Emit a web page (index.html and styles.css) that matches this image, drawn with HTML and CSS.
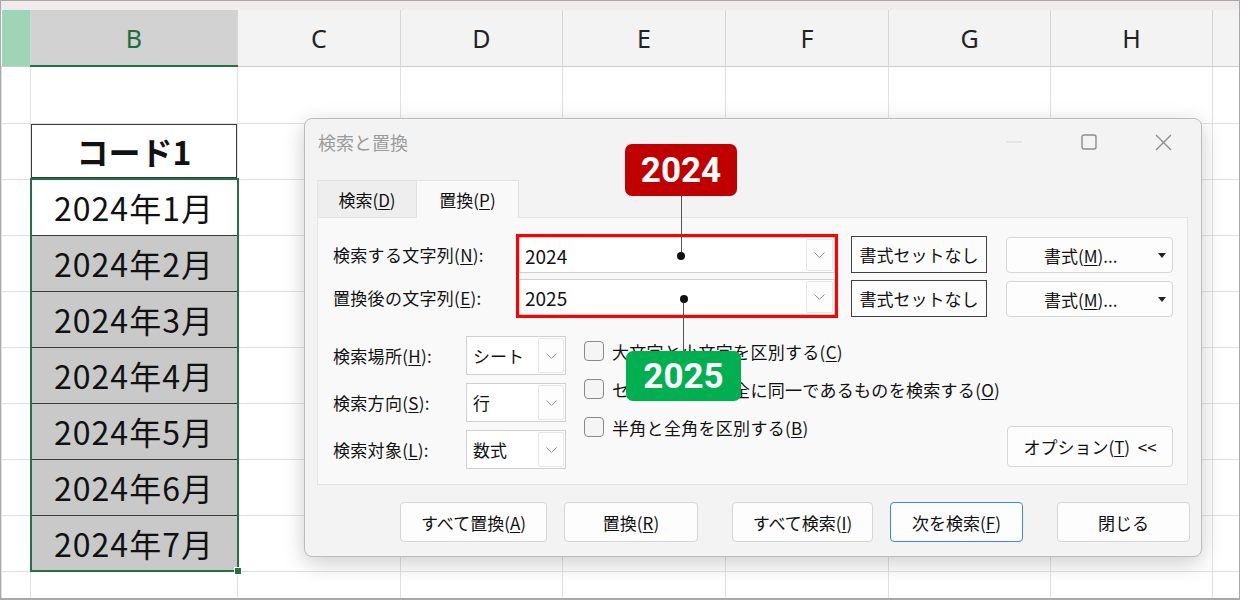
FILE: index.html
```html
<!DOCTYPE html>
<html lang="ja">
<head>
  <meta charset="UTF-8">
  <meta name="viewport" content="width=device-width, initial-scale=1.0">
  <title>検索と置換</title>
  <link rel="stylesheet" href="styles.css">
</head>
<body>
<div class="app">
  <div class="topstrip"></div>

  <table class="sheet">
    <colgroup>
      <col class="w-rh"><col class="w-b"><col class="w-163"><col class="w-162"><col class="w-163">
      <col class="w-163"><col class="w-162"><col class="w-162"><col class="w-end">
    </colgroup>
    <thead>
      <tr class="r-head">
        <th class="corner"></th><th class="cur">B</th><th>C</th><th>D</th><th>E</th><th>F</th><th>G</th><th>H</th><th class="edge"></th>
      </tr>
    </thead>
    <tbody>
      <tr class="r-57"><td></td><td></td><td></td><td></td><td></td><td></td><td></td><td></td><td class="edge"></td></tr>
      <tr class="r-56"><td></td><td class="head">コード1</td><td></td><td></td><td></td><td></td><td></td><td></td><td class="edge"></td></tr>
      <tr class="r-56"><td></td><td class="sel first">2024年1月</td><td></td><td></td><td></td><td></td><td></td><td></td><td class="edge"></td></tr>
      <tr class="r-56"><td></td><td class="sel gray">2024年2月</td><td></td><td></td><td></td><td></td><td></td><td></td><td class="edge"></td></tr>
      <tr class="r-56"><td></td><td class="sel gray">2024年3月</td><td></td><td></td><td></td><td></td><td></td><td></td><td class="edge"></td></tr>
      <tr class="r-56"><td></td><td class="sel gray">2024年4月</td><td></td><td></td><td></td><td></td><td></td><td></td><td class="edge"></td></tr>
      <tr class="r-56"><td></td><td class="sel gray">2024年5月</td><td></td><td></td><td></td><td></td><td></td><td></td><td class="edge"></td></tr>
      <tr class="r-56"><td></td><td class="sel gray">2024年6月</td><td></td><td></td><td></td><td></td><td></td><td></td><td class="edge"></td></tr>
      <tr class="r-56"><td></td><td class="sel gray last">2024年7月<span class="handle"></span></td><td></td><td></td><td></td><td></td><td></td><td></td><td class="edge"></td></tr>
      <tr class="r-end"><td></td><td></td><td></td><td></td><td></td><td></td><td></td><td></td><td class="edge"></td></tr>
    </tbody>
  </table>

  <div class="dialog">
    <div class="titlebar">
      <span class="title">検索と置換</span>
      <div class="winctl">
        <span class="ctl">
          <svg width="16" height="2" viewBox="0 0 16 2"><line x1="0" y1="1" x2="16" y2="1" stroke="#d6d6d6" stroke-width="1"/></svg>
        </span>
        <span class="ctl">
          <svg width="16" height="16" viewBox="0 0 16 16"><rect x="1" y="1" width="14" height="14" rx="2" fill="none" stroke="#8c8c8c" stroke-width="1.4"/></svg>
        </span>
        <span class="ctl">
          <svg width="17" height="17" viewBox="0 0 17 17"><path d="M1 1 L16 16 M16 1 L1 16" stroke="#8c8c8c" stroke-width="1.4" fill="none"/></svg>
        </span>
      </div>
    </div>

    <div class="tabs">
      <span class="tab">検索(<u>D</u>)</span>
      <span class="tab active">置換(<u>P</u>)</span>
    </div>

    <div class="panel">
      <div class="find-row">
        <div class="labels">
          <span class="lbl">検索する文字列(<u>N</u>):</span>
          <span class="lbl">置換後の文字列(<u>E</u>):</span>
        </div>
        <div class="highlight">
          <div class="combo">
            <span>2024</span>
            <span class="drop"><svg width="11" height="6" viewBox="0 0 11 6"><path d="M0.5 0.5 L5.5 5.5 L10.5 0.5" fill="none" stroke="#8f8f8f" stroke-width="1"/></svg></span>
          </div>
          <div class="combo">
            <span>2025</span>
            <span class="drop"><svg width="11" height="6" viewBox="0 0 11 6"><path d="M0.5 0.5 L5.5 5.5 L10.5 0.5" fill="none" stroke="#8f8f8f" stroke-width="1"/></svg></span>
          </div>
        </div>
        <div class="col-none">
          <button class="btn-none">書式セットなし</button>
          <button class="btn-none">書式セットなし</button>
        </div>
        <div class="col-fmt">
          <button class="btn btn-fmt"><span>書式(<u>M</u>)...</span><span class="caret"></span></button>
          <button class="btn btn-fmt"><span>書式(<u>M</u>)...</span><span class="caret"></span></button>
        </div>
      </div>

      <div class="opt-row">
        <div class="scope">
          <span class="lbl">検索場所(<u>H</u>):</span>
          <div class="select">
            <span>シート</span>
            <span class="drop"><svg width="11" height="6" viewBox="0 0 11 6"><path d="M0.5 0.5 L5.5 5.5 L10.5 0.5" fill="none" stroke="#8f8f8f" stroke-width="1"/></svg></span>
          </div>
          <span class="lbl">検索方向(<u>S</u>):</span>
          <div class="select">
            <span>行</span>
            <span class="drop"><svg width="11" height="6" viewBox="0 0 11 6"><path d="M0.5 0.5 L5.5 5.5 L10.5 0.5" fill="none" stroke="#8f8f8f" stroke-width="1"/></svg></span>
          </div>
          <span class="lbl">検索対象(<u>L</u>):</span>
          <div class="select">
            <span>数式</span>
            <span class="drop"><svg width="11" height="6" viewBox="0 0 11 6"><path d="M0.5 0.5 L5.5 5.5 L10.5 0.5" fill="none" stroke="#8f8f8f" stroke-width="1"/></svg></span>
          </div>
        </div>

        <div class="checks">
          <div class="check"><span class="box"></span>大文字と小文字を区別する(<u>C</u>)</div>
          <div class="check"><span class="box"></span>セルの内容が完全に同一であるものを検索する(<u>O</u>)</div>
          <div class="check"><span class="box"></span>半角と全角を区別する(<u>B</u>)</div>
        </div>

        <button class="btn btn-opt">オプション(<u>T</u>)&nbsp;&nbsp;&lt;&lt;</button>
      </div>
    </div>

    <div class="actions">
      <button class="btn w-147">すべて置換(<u>A</u>)</button>
      <button class="btn w-134">置換(<u>R</u>)</button>
      <button class="btn w-141 wide">すべて検索(<u>I</u>)</button>
      <button class="btn w-133 default">次を検索(<u>F</u>)</button>
      <button class="btn w-133 wide">閉じる</button>
    </div>
  </div>

  <!-- annotations -->
  <div class="pin pin-find">
    <div class="tag red">2024</div>
    <div class="stem"></div>
    <div class="dot"></div>
  </div>
  <div class="pin pin-repl">
    <div class="dot"></div>
    <div class="stem"></div>
    <div class="tag green">2025</div>
  </div>
</div>
</body>
</html>
```

FILE: styles.css
```css
body {
  margin: 0;
  font-family: "Noto Sans CJK JP", "Noto Sans", sans-serif;
  color: #111;
}
.app {
  position: relative;
  width: 1240px;
  height: 600px;
  box-sizing: border-box;
  border: 1px solid #a9a9a9;
  border-bottom-width: 2px;
  overflow: hidden;
  background: #fff;
}
.topstrip {
  height: 9px;
  background: #f1ecec;
}

/* sheet */
.sheet {
  border-collapse: collapse;
  table-layout: fixed;
  width: 1238px;
}
.w-rh { width: 29px; }
.w-b { width: 207px; }
.w-163 { width: 163px; }
.w-162 { width: 162px; }
.w-end { width: 27px; }
.r-head { height: 56px; }
.r-57 { height: 57px; }
.r-56 { height: 56px; }
.r-end { height: 27px; }
.sheet th {
  padding: 0;
  background: #f3f3f3;
  border-right: 1px solid #d5d5d5;
  border-bottom: 1px solid #cbcbcb;
  font-family: "Noto Sans", sans-serif;
  font-weight: 400;
  font-size: 25px;
  color: #222;
}
.sheet th.corner {
  background: #9fd5b7;
}
.sheet th.cur {
  background: #d2d2d2;
  color: #1d6d40;
  border-bottom: 2px solid #217346;
}
.sheet td {
  padding: 0;
  border: 1px solid #e1e1e1;
  text-align: center;
  font-size: 32px;
  letter-spacing: 1px;
  color: #111;
}
.sheet th.edge,
.sheet td.edge {
  border-right: none;
}
.sheet td.head {
  font-weight: 700;
  font-size: 32px;
  letter-spacing: 0;
  box-shadow: inset 0 0 0 1px #3a3a3a;
}
.sheet td.sel {
  border-left: 2px solid #217346;
  border-right: 2px solid #217346;
  border-top: 1px solid #3a3a3a;
  border-bottom: 1px solid #3a3a3a;
}
.sheet td.sel.first {
  border-top: 2px solid #217346;
}
.sheet td.sel.last {
  border-bottom: 2px solid #217346;
  position: relative;
}
.sheet td.gray {
  background: #c9c9c9;
}
.handle {
  position: absolute;
  right: -5px;
  bottom: -5px;
  width: 6px;
  height: 6px;
  background: #217346;
  border: 1px solid #fff;
}

/* dialog */
.dialog {
  position: absolute;
  left: 303px;
  top: 117px;
  width: 898px;
  height: 439px;
  box-sizing: border-box;
  border: 1px solid #bdbdbd;
  border-radius: 8px;
  background: #f3f3f3;
  box-shadow: 0 6px 22px rgba(0, 0, 0, 0.2);
  display: flex;
  flex-direction: column;
}
.titlebar {
  height: 46px;
  display: flex;
  align-items: center;
  padding-left: 13px;
}
.title {
  font-size: 18px;
  color: #9b9b9b;
}
.winctl {
  margin-left: auto;
  display: flex;
}
.ctl {
  width: 75px;
  height: 46px;
  display: flex;
  align-items: center;
  justify-content: center;
}
.tabs {
  display: flex;
  height: 37px;
  margin: 15px 0 0 12px;
}
.tab {
  width: 100px;
  box-sizing: border-box;
  border: 1px solid #e2e2e2;
  border-bottom: none;
  background: #eeeeee;
  font-size: 17px;
  display: flex;
  align-items: center;
  justify-content: center;
}
.tab.active {
  width: 102px;
  height: 38px;
  margin-bottom: -1px;
  border-left: none;
  background: #f9f9f9;
  position: relative;
}
u {
  text-underline-offset: 2px;
  text-decoration-thickness: 1px;
}
.panel {
  height: 268px;
  margin: 0 13px 0 12px;
  box-sizing: border-box;
  border: 1px solid #e4e4e4;
  background: #f9f9f9;
  padding: 16px 14px 0 15px;
}
.lbl {
  font-size: 17px;
  letter-spacing: 0.3px;
  display: flex;
  align-items: center;
}
.find-row {
  display: flex;
  align-items: flex-start;
}
.labels {
  width: 183px;
  padding-top: 2px;
  display: flex;
  flex-direction: column;
  gap: 7px;
}
.labels .lbl {
  height: 36px;
}
.highlight {
  width: 322px;
  box-sizing: border-box;
  border: 3px solid #ff0000;
  display: flex;
  flex-direction: column;
  gap: 6px;
}
.combo,
.select {
  height: 36px;
  box-sizing: border-box;
  border: 1px solid #cfcfcf;
  background: #fff;
  display: flex;
  align-items: center;
  padding-left: 5px;
  font-size: 19px;
}
.drop {
  margin-left: auto;
  margin-right: 1px;
  width: 27px;
  height: 32px;
  box-sizing: border-box;
  border: 1px solid #e6e6e6;
  border-radius: 2px;
  background: #fdfdfd;
  display: flex;
  align-items: center;
  justify-content: center;
}
button {
  font-family: inherit;
  font-size: 17px;
  color: #111;
  padding: 0;
  cursor: pointer;
}
.btn {
  background: #fdfdfd;
  border: 1px solid #d6d6d6;
  border-radius: 4px;
}
.col-none {
  margin-left: 13px;
  padding-top: 2px;
  display: flex;
  flex-direction: column;
  gap: 7px;
}
.btn-none {
  width: 136px;
  height: 37px;
  background: #fcfcfc;
  border: 1.5px solid #404040;
  border-radius: 0;
}
.col-fmt {
  margin-left: 19px;
  padding-top: 3px;
  display: flex;
  flex-direction: column;
  gap: 8px;
}
.btn-fmt {
  width: 167px;
  height: 36px;
  display: flex;
  align-items: center;
  padding-left: 37px;
}
.caret {
  margin-left: auto;
  margin-right: 6px;
  width: 0;
  height: 0;
  border-left: 4px solid transparent;
  border-right: 4px solid transparent;
  border-top: 5px solid #222;
}
.opt-row {
  display: flex;
  margin-top: 18px;
}
.scope {
  display: grid;
  grid-template-columns: 133px 100px;
  grid-auto-rows: 39px;
  row-gap: 8px;
}
.select {
  height: 39px;
  padding-left: 6px;
  font-size: 17px;
}
.select .drop {
  width: 26px;
  height: 35px;
}
.checks {
  margin-left: 18px;
  padding-top: 5px;
  display: flex;
  flex-direction: column;
  gap: 18px;
}
.check {
  height: 20px;
  display: flex;
  align-items: center;
  font-size: 17px;
  letter-spacing: 0.3px;
}
.box {
  width: 20px;
  height: 20px;
  box-sizing: border-box;
  border: 1px solid #8a8a8a;
  border-radius: 4px;
  background: #f5f5f5;
  margin-right: 8px;
}
.btn-opt {
  margin-left: auto;
  align-self: flex-end;
  margin-bottom: 2px;
  width: 166px;
  height: 41px;
}
.actions {
  display: flex;
  justify-content: flex-end;
  gap: 17px;
  margin-top: 17px;
  padding-right: 11px;
}
.actions .btn {
  height: 40px;
}
.actions .wide {
  margin-left: 17px;
}
.w-147 { width: 147px; }
.w-134 { width: 134px; }
.w-141 { width: 141px; }
.w-133 { width: 133px; }
.actions .default {
  border: 1.5px solid #3a8ad8;
}

/* callouts */
.pin {
  position: absolute;
  display: flex;
  flex-direction: column;
  align-items: center;
}
.pin-find {
  left: 624px;
  top: 143px;
}
.pin-repl {
  left: 625px;
  top: 294px;
}
.tag {
  width: 112px;
  height: 52px;
  border-radius: 7px;
  color: #fff;
  font-family: Roboto, "Noto Sans", sans-serif;
  font-weight: 700;
  font-size: 35px;
  display: flex;
  align-items: center;
  justify-content: center;
}
.tag.red {
  background: #c00000;
}
.tag.green {
  width: 115px;
  height: 50px;
  background: #00b050;
}
.stem {
  width: 1px;
  background: #555;
}
.pin-find .stem {
  height: 56px;
}
.pin-repl .stem {
  height: 48px;
}
.dot {
  width: 8px;
  height: 8px;
  border-radius: 50%;
  background: #111;
}
```
